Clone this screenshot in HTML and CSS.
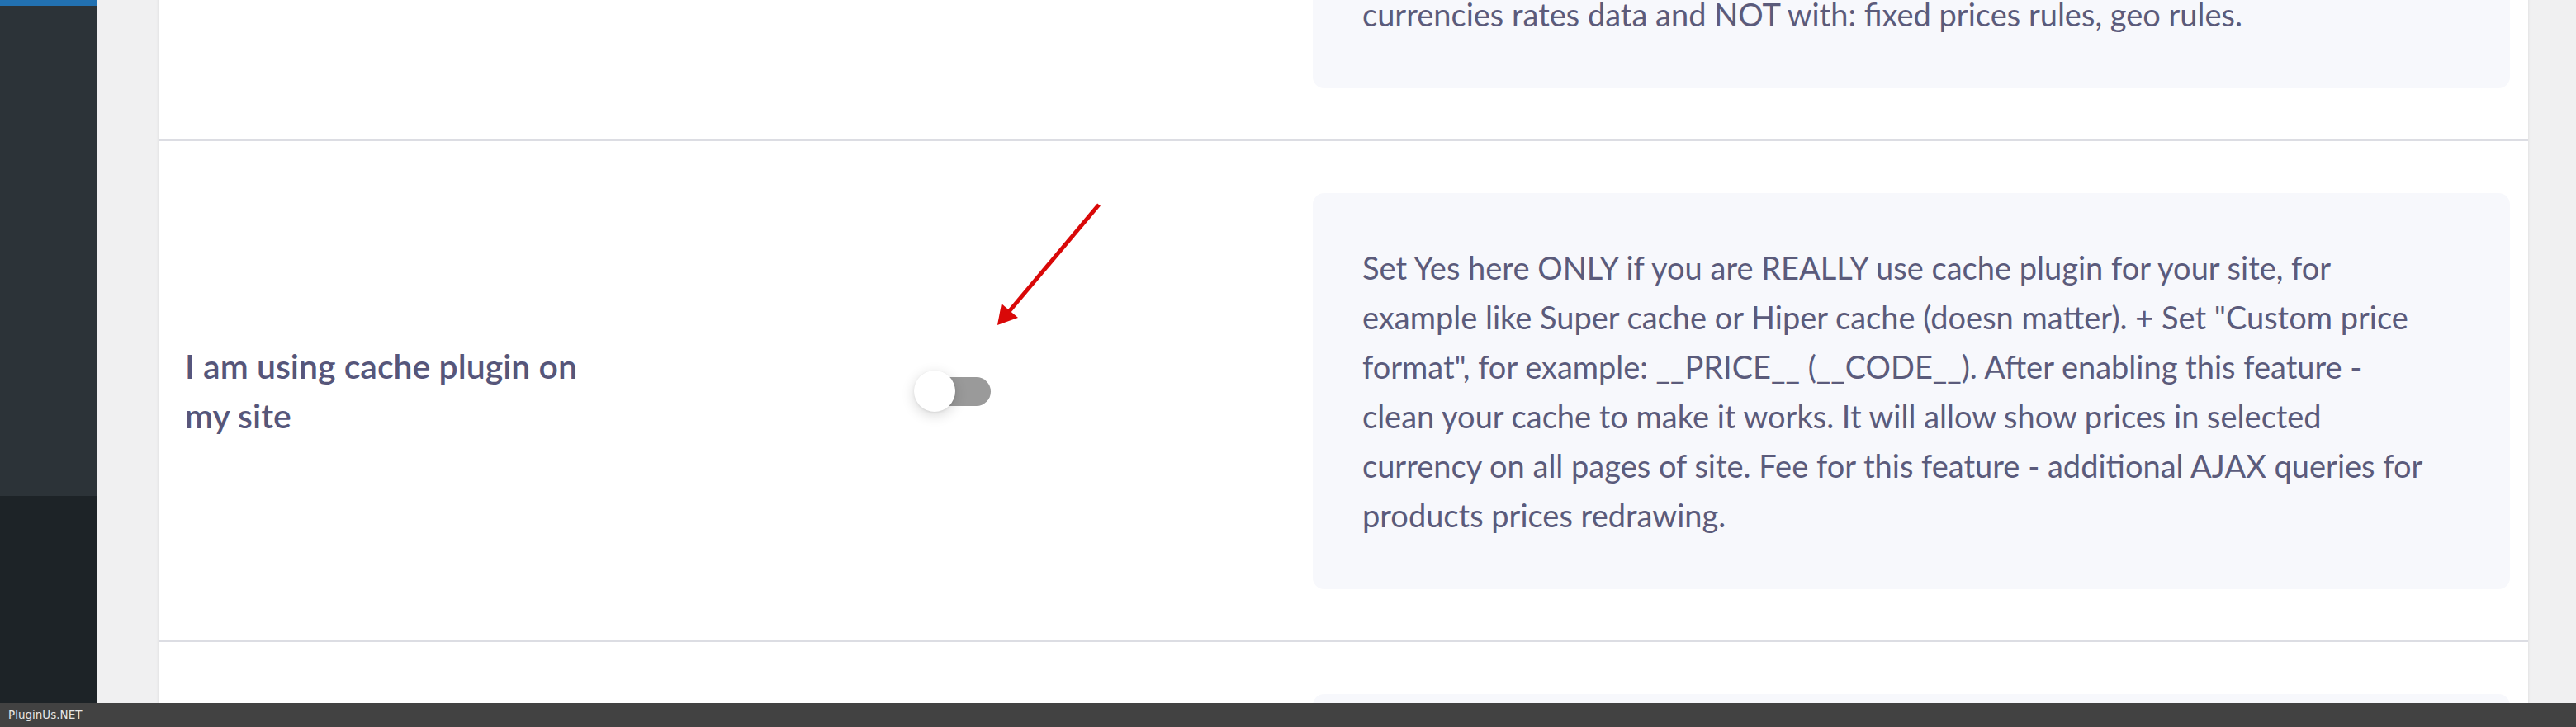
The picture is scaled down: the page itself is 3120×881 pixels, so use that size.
FILE: index.html
```html
<!DOCTYPE html>
<html lang="en">
<head>
<meta charset="utf-8">
<title>Options</title>
<link rel="stylesheet" href="styles.css">
</head>
<body>
<div class="layout">
  <aside class="sidebar">
    <div class="sidebar-accent"></div>
    <div class="sidebar-menu"></div>
    <div class="sidebar-foot"></div>
  </aside>
  <main class="main">
    <section class="card">
      <div class="row">
        <div class="label"></div>
        <div class="control">
          <span class="switch"><span class="track"></span><span class="knob"></span></span>
        </div>
        <div class="desc desc-clipped">currencies rates data and NOT with: fixed prices rules, geo rules.</div>
      </div>
      <div class="row">
        <div class="label">I am using cache plugin on my site</div>
        <div class="control">
          <span class="switch"><span class="track"></span><span class="knob"></span></span>
        </div>
        <div class="desc">Set Yes here ONLY if you are REALLY use cache plugin for your site, for<br>example like Super cache or Hiper cache (doesn matter). + Set "Custom price<br>format", for example: __PRICE__ (__CODE__). After enabling this feature -<br>clean your cache to make it works. It will allow show prices in selected<br>currency on all pages of site. Fee for this feature - additional AJAX queries for<br>products prices redrawing.</div>
      </div>
      <div class="row">
        <div class="label"></div>
        <div class="control"></div>
        <div class="desc desc-empty"></div>
      </div>
    </section>
  </main>
</div>
<footer class="footer">PluginUs.NET</footer>
<svg class="annotation" width="3120" height="881" viewBox="0 0 3120 881">
  <line x1="1331" y1="248" x2="1220" y2="380" stroke="#d90808" stroke-width="5"/>
  <polygon points="1208,394 1213,368 1233,385" fill="#d90808"/>
</svg>
</body>
</html>
```
FILE: styles.css
```css
html, body {
  margin: 0;
  padding: 0;
}
body {
  width: 3120px;
  height: 881px;
  overflow: hidden;
  background: #f0f0f1;
  display: flex;
  flex-direction: column;
  font-family: "Lato", "Noto Sans", sans-serif;
}
.layout {
  height: 852px;
  display: flex;
  overflow: hidden;
}
.sidebar {
  width: 117px;
  flex: 0 0 117px;
  display: flex;
  flex-direction: column;
}
.sidebar-accent {
  height: 7px;
  background: #2271b1;
}
.sidebar-menu {
  height: 594px;
  background: #2c3338;
}
.sidebar-foot {
  flex: 1;
  background: #1d2327;
}
.main {
  flex: 1;
  padding: 0 58px 0 75px;
  overflow: hidden;
}
.card {
  background: #ffffff;
  margin-top: -256px;
  box-shadow: 0 0 3px rgba(0, 0, 0, 0.1);
}
.row {
  display: grid;
  grid-template-columns: 883px 483px 1450px;
  align-items: center;
  padding: 63px 22px 62px 32px;
  border-bottom: 2px solid #dcdde3;
}
.label {
  max-width: 505px;
  font-size: 41px;
  line-height: 60px;
  font-weight: 600;
  color: #56567a;
}
.control {
  display: flex;
  align-items: center;
}
.switch {
  position: relative;
  display: block;
  width: 93px;
  height: 50px;
}
.track {
  position: absolute;
  left: 14px;
  right: 0;
  top: 8px;
  height: 35px;
  border-radius: 18px;
  background: #9a9a9a;
}
.knob {
  position: absolute;
  left: 0;
  top: 0;
  width: 50px;
  height: 50px;
  border-radius: 50%;
  background: #ffffff;
  box-shadow: 0 4px 16px rgba(0, 0, 0, 0.16), 0 1px 3px rgba(0, 0, 0, 0.08);
}
.desc {
  background: #f7f8fc;
  border-radius: 14px;
  padding: 60px 30px 60px 60px;
  font-size: 38px;
  line-height: 60px;
  color: #5b5b7b;
}
.desc-clipped {
  padding-top: 180px;
}
.desc-empty {
  min-height: 300px;
}
.footer {
  height: 29px;
  flex: 0 0 29px;
  background: #424242;
  color: #e6e6e6;
  font-family: "DejaVu Sans", sans-serif;
  font-size: 13.5px;
  line-height: 29px;
  padding-left: 10px;
}
.annotation {
  position: absolute;
  left: 0;
  top: 0;
  pointer-events: none;
}
```
